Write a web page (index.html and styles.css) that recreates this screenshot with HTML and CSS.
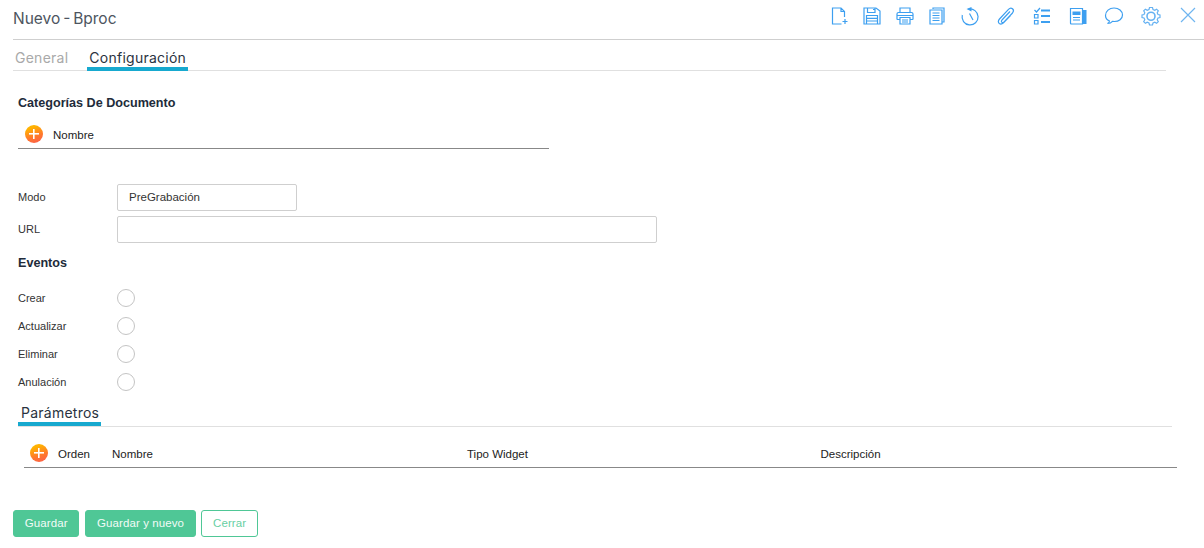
FILE: index.html
```html
<!DOCTYPE html>
<html lang="es">
<head>
<meta charset="utf-8">
<title>Nuevo - Bproc</title>
<link rel="stylesheet" href="styles.css">
</head>
<body>
<header class="topbar">
  <h1 class="title">Nuevo - Bproc</h1>
  <div class="tools">
    <div class="tool-group tight">
      <svg class="ico" viewBox="0 0 18 18"><path d="M10.5 17H1.500V1H10L13.500 4.500V10M10 1V4.500H13.500M14 12V17M11.500 14.500H16.500"/></svg>
      <svg class="ico" viewBox="0 0 18 18"><path d="M1 1H13L17 4V17H1ZM4.500 1V5.500H12V1M10 2.500H11.500M3.500 8.500H14.500V17H3.500ZM3.500 11.300H14.500M3.500 14H14.500"/></svg>
      <svg class="ico" viewBox="0 0 18 18"><path d="M4 5.500V1H14V5.500M4 12.500H1.500Q1 12.500 1 12V7Q1 5.500 2.500 5.500H15.500Q17 5.500 17 7V12Q17 12.500 16.500 12.500H14M1 8.500H17M4 10.500H14V17H4ZM6 13H12M6 15H12"/></svg>
      <svg class="ico" viewBox="0 0 18 18"><path d="M5 2V1H16V15H14M2 3H14V17H2ZM4.500 6H11.500M4.500 8.500H11.500M4.500 11H11.500M4.500 13.500H11.500"/></svg>
    </div>
    <div class="tool-group wide">
      <svg class="ico" viewBox="0 0 18 18"><path d="M7.500 2.100A8 8 0 1 1 1.300 8M8.500 6.500L12 13"/><path class="fill" d="M5.500 2L10.500 0V4.500Z"/></svg>
      <svg class="ico" viewBox="0 0 18 18"><path d="M13 4.500L5 13Q3.800 14.500 4.900 15.300Q6 16 7.300 14.700L15.500 6Q17.500 3.500 15.500 1.800Q13.500 0.200 11.500 2.400L2.500 12Q0.300 14.700 2.300 16.500Q4.300 17.800 6.500 15.800L13.500 8.500"/></svg>
      <svg class="ico" viewBox="0 0 18 18"><path d="M1.500 3L3.500 5L7 1M1.500 7.500H5V11H1.500ZM1.500 13.500H5V17H1.500Z"/><path class="thick" d="M8 3.500H17M8 9H17M8 15H17"/></svg>
      <svg class="ico" viewBox="0 0 18 18"><path d="M1.500 1.500H13.500V17H2.500Q1.500 17 1.500 16ZM4 10.500H11M4 13H11"/><path class="fill" d="M3.500 4.500H11.500V8H3.500ZM14 3H17.500V17H14Z"/></svg>
      <svg class="ico" viewBox="0 0 18 18"><path d="M4.500 14C2 13 0.500 11 0.500 8.500C0.500 4.200 4.300 1 9 1C13.800 1 17.500 4.200 17.500 8C17.500 11.800 13.800 14.500 9.500 14.500C8.800 14.500 8.200 14.500 7.500 14.400C6.500 15.600 4.500 16.500 2.500 16.500C3.500 16 4.300 15 4.500 14Z"/></svg>
      <svg class="ico gear" viewBox="0 0 18 18"><path d="M7.500 0.500H10.500L11 2.500L12.800 3.300L14.600 2.200L16.300 3.900L15.200 5.700L16 7.500L18 8V10.500L16 11L15.200 12.800L16.300 14.600L14.600 16.300L12.800 15.200L11 16L10.500 18H7.500L7 16L5.200 15.200L3.400 16.300L1.700 14.600L2.800 12.800L2 11L0 10.500V8L2 7.500L2.800 5.700L1.700 3.900L3.400 2.200L5.200 3.300L7 2.500Z"/><circle class="ring" cx="9" cy="9.250" r="4"/></svg>
      <svg class="ico close" viewBox="0 0 16 16"><path d="M1 1L15 15M15 1L1 15"/></svg>
    </div>
  </div>
</header>

<nav class="tabs">
  <span class="tab">General</span>
  <span class="tab active">Configuración</span>
</nav>

<main class="content">
  <h2 class="section first">Categorías De Documento</h2>
  <div class="grid-head cat">
    <span class="add"></span>
    <span>Nombre</span>
  </div>

  <div class="form-row modo">
    <label class="lbl">Modo</label>
    <div class="input short">PreGrabación</div>
  </div>
  <div class="form-row url">
    <label class="lbl">URL</label>
    <div class="input long"></div>
  </div>

  <h2 class="section events">Eventos</h2>
  <div class="radios">
    <div class="radio-row"><span class="lbl">Crear</span><span class="radio"></span></div>
    <div class="radio-row"><span class="lbl">Actualizar</span><span class="radio"></span></div>
    <div class="radio-row"><span class="lbl">Eliminar</span><span class="radio"></span></div>
    <div class="radio-row"><span class="lbl">Anulación</span><span class="radio"></span></div>
  </div>

  <div class="subtabs"><span class="tab active sub">Parámetros</span></div>
  <div class="grid-head params">
    <span class="add"></span>
    <span>Orden</span>
    <span>Nombre</span>
    <span>Tipo Widget</span>
    <span>Descripción</span>
  </div>
</main>

<footer class="actions">
  <button class="btn solid">Guardar</button>
  <button class="btn solid">Guardar y nuevo</button>
  <button class="btn ghost">Cerrar</button>
</footer>
</body>
</html>
```
FILE: styles.css
```css
* { box-sizing: border-box; }
html, body { margin: 0; padding: 0; }
body {
  width: 1204px;
  height: 548px;
  overflow: hidden;
  background: #fff;
  font-family: "Liberation Sans", Arial, sans-serif;
  color: #2a2f36;
}
.topbar {
  height: 40px;
  margin-left: 13px;
  border-bottom: 1px solid #cfcfcf;
  display: flex;
  justify-content: space-between;
}
.title {
  margin: 9px 0 0;
  font: 400 15.500px/20px "Inter", sans-serif;
  color: #4d5560;
  word-spacing: -1.500px;
}
.tools {
  display: flex;
  gap: 15px;
  padding: 7px 0 0;
  margin-right: 8px;
  height: 30px;
}
.tool-group { display: flex; }
.tool-group.tight { gap: 14.500px; }
.tool-group.wide { gap: 18px; }
.ico {
  width: 18px;
  height: 18px;
  fill: none;
  stroke: #3d9ff0;
  stroke-width: 1.200;
  overflow: visible;
}
.ico .fill { fill: #3d9ff0; stroke: none; }
.ico .thick { stroke-width: 2; }
.ico .ring { stroke-width: 1.600; }
.ico.gear { margin-left: 1px; stroke: #66b2f2; }
.ico.close { width: 16px; height: 16px; stroke: #6fb5f0; margin-left: 2px; }
.tabs {
  margin: 0 38px 0 13px;
  height: 31px;
  border-bottom: 1px solid #e0e0e0;
  display: flex;
  align-items: flex-end;
  gap: 17px;
}
.tab {
  font: 400 14px/20px "Inter", sans-serif;
  color: #a9a9a9;
  padding: 2px 2px 0;
  height: 25px;
  margin-bottom: -1px;
  letter-spacing: 0.250px;
}
.tab.active {
  color: #2a3340;
  border-bottom: 4px solid #17a9cf;
}
.content { padding-left: 18px; }
.section {
  margin: 0;
  font-size: 12.600px;
  line-height: 16px;
  font-weight: 700;
  color: #212b3a;
}
.section.first { padding-top: 24px; }
.grid-head {
  font-size: 11.500px;
  color: #222;
  border-bottom: 1px solid #888;
  display: flex;
  align-items: center;
}
.grid-head.cat {
  width: 531px;
  height: 34px;
  margin-top: 4px;
  padding: 6px 0 0 7px;
  gap: 10px;
}
.add {
  width: 18px;
  height: 18px;
  border-radius: 50%;
  flex: none;
  background:
    linear-gradient(#fff, #fff) center / 10px 1.600px no-repeat,
    linear-gradient(#fff, #fff) center / 1.600px 10px no-repeat,
    linear-gradient(160deg, #ffb300 20%, #ff7a2a 60%, #fb5a50);
  margin-top: -1px;
}
.form-row {
  display: flex;
  align-items: center;
}
.lbl {
  width: 99px;
  flex: none;
  font-size: 11px;
  line-height: 14px;
  color: #333;
  padding-bottom: 1px;
}
.form-row.modo { margin-top: 35px; }
.form-row.url { margin-top: 5px; }
.input {
  height: 27px;
  border: 1px solid #cfcfcf;
  border-radius: 2px;
  font-size: 11.500px;
  line-height: 25px;
  color: #333;
  padding-left: 11px;
}
.input.short { width: 180px; }
.input.long { width: 540px; }
.section.events { margin-top: 12px; }
.radios { margin-top: 18px; display: flex; flex-direction: column; gap: 10px; }
.radio-row { display: flex; align-items: center; height: 18px; }
.radio {
  width: 18px;
  height: 18px;
  border: 1px solid #c4c4c4;
  border-radius: 50%;
}
.subtabs {
  margin-top: 10px;
  width: 1154px;
  height: 26px;
  border-bottom: 1px solid #e0e0e0;
  display: flex;
}
.tab.sub { height: 25px; margin-bottom: 0; padding: 2px 2px 0 3px; }
.grid-head.params {
  margin: 0 0 0 6px;
  width: 1153px;
  height: 41px;
  display: grid;
  grid-template-columns: 28px 54px 355px 353.500px 1fr;
  padding: 13px 0 0 6px;
}
.actions {
  margin: 42px 0 0 13px;
  display: flex;
  gap: 6px;
}
.btn {
  height: 27px;
  border-radius: 3px;
  font: 400 11.500px "Liberation Sans", Arial, sans-serif;
  padding: 0 10.700px 2px;
  letter-spacing: 0.100px;
}
.btn.solid { background: #4fc796; border: 1px solid #4fc796; color: #f2fbf7; }
.btn.ghost { background: #fff; border: 1px solid #4fc796; color: #67cfa3; margin-left: -1px; padding: 0 11.200px 2px; }
```
